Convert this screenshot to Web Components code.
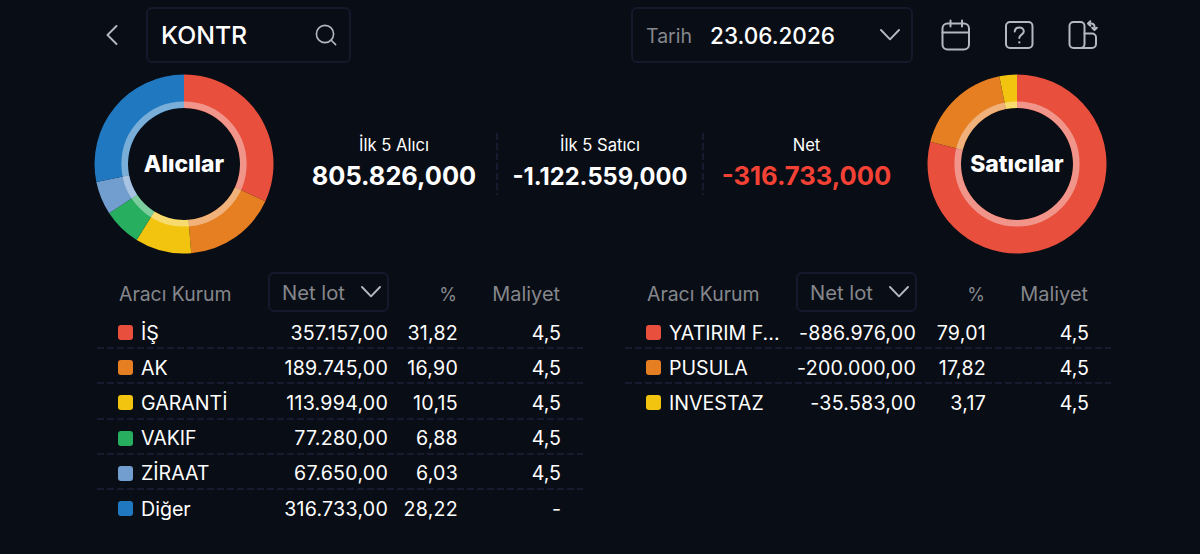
<!DOCTYPE html>
<html lang="tr">
<head>
<meta charset="utf-8">
<title>KONTR</title>
<style>
	body {
		margin: 0;
		background: #090d15;
		color: #fff;
		font-family: Inter, "Liberation Sans", sans-serif;
		--line: #181a30;
		--border: #16182c;
		--muted: #85878c;
		--icon: #b4b8c0;
	}
</style>
</head>
<body>
<broker-page></broker-page>

<script>
(function() {
	function define(name, html, setup) {
		let template = document.createElement("template");
		template.innerHTML = html;
		customElements.define(name, class extends HTMLElement {
			constructor() {
				super();
				this._root = this.attachShadow({mode: "open"});
				this._root.appendChild(template.content.cloneNode(true));
			}

			connectedCallback() {
				if (setup) setup(this, this._root);
			}
		});
	}

	const COLORS = {
		red: "#e84f3d",
		orange: "#e67f22",
		yellow: "#f2c40f",
		green: "#27ae5f",
		sky: "#719dcf",
		blue: "#2079c0"
	};

	// color, name, net lot, percent, cost
	const DATA = {
		buyers: [
			["red", "İŞ", "357.157,00", "31,82", "4,5"],
			["orange", "AK", "189.745,00", "16,90", "4,5"],
			["yellow", "GARANTİ", "113.994,00", "10,15", "4,5"],
			["green", "VAKIF", "77.280,00", "6,88", "4,5"],
			["sky", "ZİRAAT", "67.650,00", "6,03", "4,5"],
			["blue", "Diğer", "316.733,00", "28,22", "-"]
		],
		sellers: [
			["red", "YATIRIM F...", "-886.976,00", "79,01", "4,5"],
			["orange", "PUSULA", "-200.000,00", "17,82", "4,5"],
			["yellow", "INVESTAZ", "-35.583,00", "3,17", "4,5"]
		]
	};

	const ICONS = {
		back: `<svg width="12" height="20" viewBox="0 0 12 20" stroke-width="1.9"><path d="M10.5 1 1.5 10l9 9"/></svg>`,
		search: `<svg width="22" height="22" viewBox="0 0 22 22" stroke-width="1.6"><circle cx="10" cy="10" r="8.6"/><path d="m16 16 4.6 4.6"/></svg>`,
		down: `<svg width="20" height="12" viewBox="0 0 20 12" stroke-width="1.9"><path d="m1 1 9 9.3L19 1"/></svg>`,
		calendar: `<svg width="30" height="32" viewBox="0 0 30 32" stroke-width="2"><rect x="1.5" y="4.5" width="26.5" height="26" rx="5"/><path d="M1.5 13.5H28M9.5 1.5V7.5M21 1.5V7.5"/></svg>`,
		help: `<svg width="30" height="30" viewBox="0 0 30 30" stroke-width="2"><rect x="1" y="2" width="26.5" height="26" rx="4"/><path d="M9.7 11.5c.3-2.4 2-4 4.6-4 2.5 0 4.5 1.6 4.5 4 0 3-4.5 3.3-4.5 6.5"/><path d="M14.3 22.3v.1" stroke-width="2.3"/></svg>`,
		layout: `<svg width="30" height="30" viewBox="0 0 30 30" stroke-width="2"><rect x="1.5" y="2" width="15" height="26" rx="4"/><path d="M16.5 13.5H24a4 4 0 0 1 4 4V24a4 4 0 0 1-4 4H12.5"/><path d="M20.5 3.5H23q3.5 0 3.5 3.5v2.5M22.3 1.2 20 3.5l2.3 2.3M24.2 7.7l2.3 2.3 2.3-2.3"/></svg>`
	};

	define("ui-icon", `
		<style>
			:host { display: block; flex: none; color: var(--icon); }
			svg { display: block; fill: none; stroke: currentColor; stroke-linecap: round; stroke-linejoin: round; }
		</style>
		<span id="icon"></span>
	`, function(el, root) {
		root.getElementById("icon").innerHTML = ICONS[el.getAttribute("name")];
	});

	define("ui-field", `
		<style>
			:host {
				display: flex;
				align-items: center;
				justify-content: space-between;
				box-sizing: border-box;
				border: 2px solid var(--border);
				border-radius: 6px;
				white-space: nowrap;
			}
		</style>
		<slot></slot>
	`);

	define("top-bar", `
		<style>
			:host { display: flex; align-items: center; height: 56px; }
			.back { margin-left: 11px; }
			.search { width: 205px; height: 56px; margin-left: 28px; padding: 0 12px 0 13px; }
			.symbol { font-size: 24.8px; font-weight: 500; }
			.date { width: 282px; height: 56px; margin-left: auto; padding: 0 11px 0 13px; }
			.date span { display: flex; align-items: center; }
			.label { font-size: 19.5px; color: var(--muted); padding-top: 2px; }
			.day { font-size: 22.5px; font-weight: 500; margin-left: 18px; }
			.calendar { margin-left: 28px; }
			.help { margin-left: 34px; }
			.layout { margin: 0 13px 0 33px; }
		</style>
		<ui-icon class="back" name="back"></ui-icon>
		<ui-field class="search">
			<span class="symbol">KONTR</span>
			<ui-icon name="search"></ui-icon>
		</ui-field>
		<ui-field class="date">
			<span><span class="label">Tarih</span><span class="day">23.06.2026</span></span>
			<ui-icon name="down"></ui-icon>
		</ui-field>
		<ui-icon class="calendar" name="calendar"></ui-icon>
		<ui-icon class="help" name="help"></ui-icon>
		<ui-icon class="layout" name="layout"></ui-icon>
	`);

	define("donut-chart", `
		<style>
			:host { display: grid; place-items: center; width: 180px; height: 180px; }
			svg, span { grid-area: 1 / 1; }
			span { font-size: 22.9px; line-height: 28px; font-weight: 800; }
		</style>
		<svg width="180" height="180" viewBox="-90 -90 180 180">
			<g id="slices"></g>
			<circle r="59.3" fill="none" stroke="#fff" stroke-opacity=".4" stroke-width="6.6"/>
		</svg>
		<span><slot></slot></span>
	`, function(el, root) {
		let rows = DATA[el.getAttribute("side")];
		let share = row => parseFloat(row[3].replace(",", "."));
		let total = rows.reduce((sum, row) => sum + share(row), 0);
		let point = (r, t) => (r * Math.sin(t)).toFixed(2) + " " + (-r * Math.cos(t)).toFixed(2);
		let at = 0;
		root.getElementById("slices").innerHTML = rows.map(row => {
			let from = at;
			at += share(row) / total * Math.PI * 2;
			let large = at - from > Math.PI ? 1 : 0;
			return `<path fill="${COLORS[row[0]]}" d="M${point(89.5, from)}A89.5 89.5 0 ${large} 1 ${point(89.5, at)}L${point(56, at)}A56 56 0 ${large} 0 ${point(56, from)}Z"/>`;
		}).join("");
	});

	define("stat-item", `
		<style>
			:host {
				display: flex;
				flex-direction: column;
				align-items: center;
				box-sizing: border-box;
				width: 206px;
				height: 62px;
				white-space: nowrap;
			}
			.label { font-size: 16.6px; line-height: 20px; margin-top: 2px; }
			.value { font-size: 25.4px; line-height: 32px; font-weight: 700; margin-top: 5px; }
			:host([divided]) {
				padding-right: 1px;
				background: repeating-linear-gradient(var(--line) 0 7px, transparent 7px 10px) right / 2px 100% no-repeat;
			}
			:host([small]) .value { font-size: 23.7px; padding-top: 1px; }
			:host([negative]) .value { color: #f34235; font-size: 25.6px; }
		</style>
		<span class="label"><slot name="label"></slot></span>
		<span class="value"><slot></slot></span>
	`);

	define("broker-row", `
		<style>
			:host {
				display: grid;
				grid-template-columns: 15px 125px 130px 70px 103px;
				align-items: center;
				box-sizing: border-box;
				height: 35.2px;
				padding: 2px 22px 0 21px;
				font-size: 19.6px;
				text-align: right;
				white-space: nowrap;
				background: repeating-linear-gradient(90deg, var(--line) 0 7px, transparent 7px 10px) bottom / 100% 2px no-repeat;
			}
			:host(:last-of-type) { background: none; }
			i { width: 15px; height: 15px; border-radius: 3px; }
			.name { text-align: left; padding-left: 8px; }
			.lot, .pct { letter-spacing: .25px; }
		</style>
		<i></i><span class="name"></span><span class="lot"></span><span class="pct"></span><span class="cost"></span>
	`, function(el, root) {
		root.querySelector("i").style.background = COLORS[el.row[0]];
		["name", "lot", "pct", "cost"].forEach((key, n) => {
			root.querySelector("." + key).textContent = el.row[n + 1];
		});
	});

	define("broker-table", `
		<style>
			:host { display: block; width: 486px; }
			.head {
				display: grid;
				grid-template-columns: 149px 121px 68px 103px;
				align-items: center;
				height: 39px;
				padding: 0 22px 0 22px;
				margin-bottom: 3px;
				font-size: 19.4px;
				color: var(--muted);
				text-align: right;
			}
			.head span { padding-top: 4px; }
			.head .name { text-align: left; }
			.head .pct { font-size: 18px; }
			.head .cost { font-size: 19.9px; }
			ui-field { height: 40px; padding: 0 6px 0 12px; font-size: 20.2px; }
		</style>
		<div class="head">
			<span class="name">Aracı Kurum</span>
			<ui-field>Net lot<ui-icon name="down"></ui-icon></ui-field>
			<span class="pct">%</span>
			<span class="cost">Maliyet</span>
		</div>
		<div id="rows"></div>
	`, function(el, root) {
		DATA[el.getAttribute("side")].forEach(data => {
			let row = document.createElement("broker-row");
			row.row = data;
			root.getElementById("rows").appendChild(row);
		});
	});

	define("broker-page", `
		<style>
			:host { display: block; box-sizing: border-box; height: 554px; padding: 7px 89px 0 95px; overflow: hidden; }
			.summary { display: flex; align-items: center; justify-content: space-between; height: 180px; margin: 11px 4px 0 -1px; }
			.stats { display: flex; }
			.tables { display: flex; justify-content: space-between; margin: 18px 0 0 2px; }
		</style>
		<top-bar></top-bar>
		<div class="summary">
			<donut-chart side="buyers">Alıcılar</donut-chart>
			<div class="stats">
				<stat-item divided><span slot="label">İlk 5 Alıcı</span>805.826,000</stat-item>
				<stat-item divided small><span slot="label">İlk 5 Satıcı</span>-1.122.559,000</stat-item>
				<stat-item negative><span slot="label">Net</span>-316.733,000</stat-item>
			</div>
			<donut-chart side="sellers">Satıcılar</donut-chart>
		</div>
		<div class="tables">
			<broker-table side="buyers"></broker-table>
			<broker-table side="sellers"></broker-table>
		</div>
	`);
})();
</script>
</body>
</html>
